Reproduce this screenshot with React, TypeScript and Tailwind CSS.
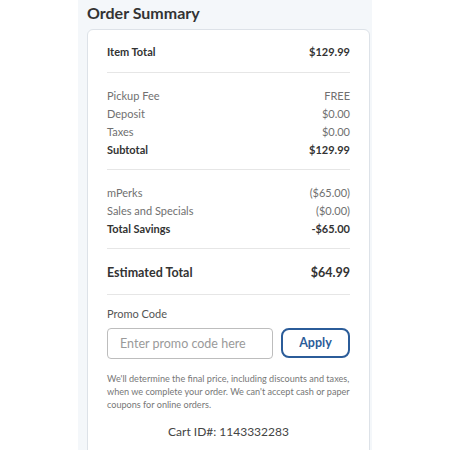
import React from "react";

const font = { fontFamily: '"Source Sans Pro", Lato, "Liberation Sans", sans-serif' };

function Row({ label, value, bold }: { label: string; value: string; bold?: boolean }) {
  return (
    <div
      className={`flex h-[18px] items-center justify-between text-[11px] ${
        bold ? "font-bold text-[#333333]" : "text-[#707070]"
      }`}
    >
      <span>{label}</span>
      <span>{value}</span>
    </div>
  );
}

export default function App() {
  return (
    <div className="h-[450px] w-[450px] overflow-hidden bg-white" style={font}>
      <div className="ml-[78px] h-full w-[294px] bg-[#f4f7fa] pl-[9px] pr-[2px]">
        <h2 className="flex h-[29px] items-center pb-[3px] text-[16px] font-bold text-[#333333]">
          Order Summary
        </h2>
        <div className="h-[440px] rounded-md border border-[#dde2e8] bg-white px-[19px]">
          <div className="border-b border-[#e6e6e6] pb-[11px] pt-[13px]">
            <Row label="Item Total" value="$129.99" bold />
          </div>
          <div className="border-b border-[#e6e6e6] pb-[10px] pt-[14px]">
            <Row label="Pickup Fee" value="FREE" />
            <Row label="Deposit" value="$0.00" />
            <Row label="Taxes" value="$0.00" />
            <Row label="Subtotal" value="$129.99" bold />
          </div>
          <div className="border-b border-[#e6e6e6] pb-[10px] pt-[14px]">
            <Row label="mPerks" value="($65.00)" />
            <Row label="Sales and Specials" value="($0.00)" />
            <Row label="Total Savings" value="-$65.00" bold />
          </div>
          <div className="flex h-[46px] items-center justify-between border-b border-[#e6e6e6] pt-[3px] text-[12.5px] font-bold text-[#333333]">
            <span>Estimated Total</span>
            <span>$64.99</span>
          </div>
          <div className="mt-[10px] flex h-[18px] items-center text-[11px] text-[#555555]">Promo Code</div>
          <div className="mt-[5px] flex items-start gap-[8px]">
            <input
              className="h-[31px] w-[166px] rounded-[4px] border border-[#bdbdbd] px-[12px] text-[12.5px] text-[#333] placeholder:text-[#9a9a9a] outline-none"
              placeholder="Enter promo code here"
              style={font}
            />
            <button className="h-[30px] flex-1 rounded-lg border-2 border-[#2b5c99] bg-white text-[12.5px] font-bold text-[#2b5c99]">
              Apply
            </button>
          </div>
          <p className="mt-[13px] text-[9.1px] leading-[13px] text-[#777777]">
            We'll determine the final price, including discounts and taxes, when we complete your order. We can't
            accept cash or paper coupons for online orders.
          </p>
          <div className="mt-[13px] text-center text-[12px] leading-[16px] text-[#444444]">Cart ID#: 1143332283</div>
        </div>
      </div>
    </div>
  );
}
